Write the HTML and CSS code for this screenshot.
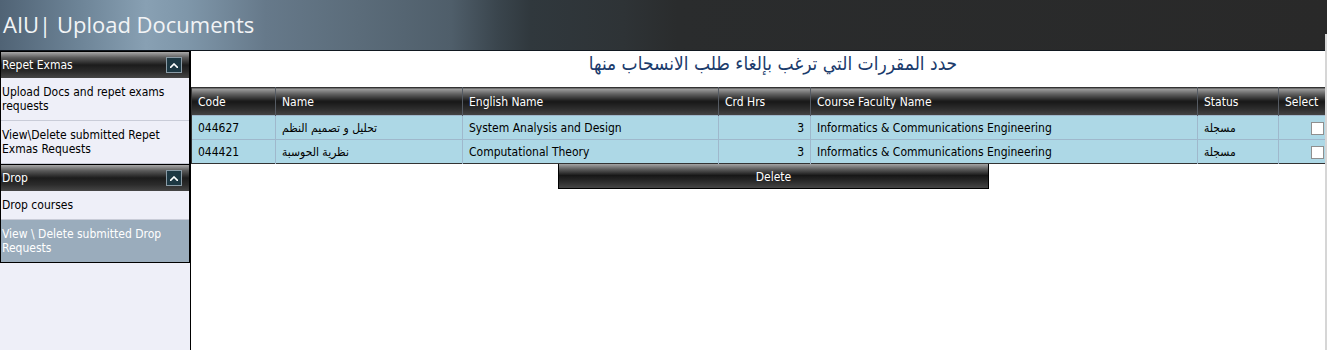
FILE: index.html
```html
<!DOCTYPE html>
<html>
<head>
<meta charset="utf-8">
<link rel="stylesheet" href="styles.css">
</head>
<body>
    <div class="header">
        <h1>AIU| Upload Documents</h1>
    </div>
    <div class="scroll-edge"></div>

    <div class="page">
        <div class="sidebar">
            <div class="menu">
                <div class="menu-head">
                    <span>Repet Exmas</span>
                    <span class="toggle"><svg width="8" height="5" viewBox="0 0 8 5"><path d="M0 5 L4 1 L8 5" fill="none" stroke="#fff" stroke-width="1.6"/></svg></span>
                </div>
                <a class="menu-item">Upload Docs and repet exams requests</a>
                <a class="menu-item">View\Delete submitted Repet Exmas Requests</a>

                <div class="menu-head">
                    <span>Drop</span>
                    <span class="toggle"><svg width="8" height="5" viewBox="0 0 8 5"><path d="M0 5 L4 1 L8 5" fill="none" stroke="#fff" stroke-width="1.6"/></svg></span>
                </div>
                <a class="menu-item">Drop courses</a>
                <a class="menu-item selected">View \ Delete submitted Drop Requests</a>
            </div>
        </div>

        <div class="main">
            <h2 dir="rtl">حدد المقررات التي ترغب بإلغاء طلب الانسحاب منها</h2>
            <table class="grid">
                <thead>
                    <tr>
                        <th class="c-code">Code</th>
                        <th class="c-name">Name</th>
                        <th class="c-en">English Name</th>
                        <th class="c-hrs">Crd Hrs</th>
                        <th class="c-fac">Course Faculty Name</th>
                        <th class="c-status">Status</th>
                        <th class="c-sel">Select</th>
                    </tr>
                </thead>
                <tbody>
                    <tr>
                        <td>044627</td>
                        <td>تحليل و تصميم النظم</td>
                        <td>System Analysis and Design</td>
                        <td class="num">3</td>
                        <td>Informatics &amp; Communications Engineering</td>
                        <td>مسجلة</td>
                        <td class="sel"><input type="checkbox"></td>
                    </tr>
                    <tr>
                        <td>044421</td>
                        <td>نظرية الحوسبة</td>
                        <td>Computational Theory</td>
                        <td class="num">3</td>
                        <td>Informatics &amp; Communications Engineering</td>
                        <td>مسجلة</td>
                        <td class="sel"><input type="checkbox"></td>
                    </tr>
                </tbody>
            </table>
            <div class="actions">
                <button class="btn-delete">Delete</button>
            </div>
        </div>
    </div>
</body>
</html>
```

FILE: styles.css
```css
body {
    margin: 0;
    background-color: #fff;
    font-family: "DejaVu Sans Condensed", "DejaVu Sans", sans-serif;
    font-size: 12px;
    color: #000;
}
.header {
    height: 50px;
    border-bottom: 1px solid #111820;
    background: linear-gradient(to right, #506375 0%, #6d8497 6%, #88a0b3 11%, #7f97aa 14%, #66798a 20%, #5b6c7a 27%, #4f5e6a 34%, #3a454d 37.5%, #30383d 40%, #2e3336 47%, #2a2c2d 51%, #292929 100%);
}
.header h1 {
    margin: 0;
    padding: 9px 0 0 3px;
    font-family: "Open Sans", sans-serif;
    font-weight: normal;
    font-size: 22px;
    color: #f2f4f6;
}
.scroll-edge {
    position: absolute;
    top: 34px;
    right: 0;
    bottom: 0;
    width: 2px;
    background-color: #d6d6d6;
}
.page {
    display: flex;
    width: 1325px;
    min-height: calc(100vh - 51px);
}
.sidebar {
    width: 190px;
    flex: none;
    background-color: #eeeff8;
    border-right: 1px solid #000;
}
.menu {
    width: 188px;
    border: 1px solid #000;
    border-top: none;
}
.menu-head {
    height: 26px;
    display: flex;
    align-items: center;
    justify-content: space-between;
    padding-left: 1px;
    padding-right: 7px;
    border-top: 1px solid #000;
    color: #fff;
    background: linear-gradient(#a9a9a9 0%, #5a5a5a 22%, #1c1c1c 50%, #2b2b2b 75%, #464646 100%);
}
.toggle {
    width: 14px;
    height: 14px;
    display: flex;
    align-items: center;
    justify-content: center;
    background-color: #1d3843;
    border: 1px solid #8a9ba6;
}
.menu-item {
    display: block;
    padding: 7px 2px 7px 1px;
    line-height: 14px;
    border-bottom: 1px solid #c9ccd8;
    color: #000;
}
.menu-item:last-child {
    border-bottom: none;
}
.menu-item.selected {
    background-color: #9aacbc;
    color: #fff;
}
.main {
    flex: 1;
    min-width: 0;
}
.main h2 {
    margin: 0;
    height: 36px;
    padding-top: 1px;
    padding-left: 30px;
    box-sizing: border-box;
    text-align: center;
    font-weight: normal;
    font-size: 19px;
    color: #1b3b6c;
}
.grid {
    width: 100%;
    border-collapse: collapse;
    table-layout: fixed;
    border-top: 1px solid #333;
    border-bottom: 1px solid #333;
}
.grid th {
    height: 27px;
    text-align: left;
    font-weight: normal;
    color: #fff;
    padding: 0 6px;
    border-left: 1px solid #555b63;
    background: linear-gradient(#a3a3a3 0%, #5c5c5c 22%, #171717 48%, #2a2a2a 72%, #454545 100%);
}
.grid th:first-child {
    border-left: 1px solid #333;
}
.grid td {
    height: 23px;
    padding: 0 6px;
    background-color: #add8e6;
    border-left: 1px solid #9fb8cc;
    border-top: 1px solid #9fb8cc;
}
.grid td:first-child {
    border-left: 1px solid #333;
}
.grid td.num {
    text-align: right;
}
.grid td.sel {
    text-align: right;
    padding: 0 1px 0 0;
}
.sel input {
    margin: 0;
    width: 13px;
    height: 13px;
    vertical-align: middle;
    appearance: none;
    background-color: #fff;
    border: 1px solid #8f8f8f;
}
.c-code { width: 71px; }
.c-name { width: 174px; }
.c-en { width: 243px; }
.c-hrs { width: 79px; }
.c-fac { width: 374px; }
.c-status { width: 68px; }
.c-sel { width: 34px; }
.actions {
    display: flex;
    padding-left: 367px;
}
.btn-delete {
    width: 431px;
    height: 25px;
    padding-top: 2px;
    font-family: inherit;
    font-size: 12px;
    color: #fff;
    border: 1px solid #000;
    border-top: none;
    background: linear-gradient(#a3a3a3 0%, #5c5c5c 22%, #171717 48%, #2a2a2a 72%, #454545 100%);
}
```
